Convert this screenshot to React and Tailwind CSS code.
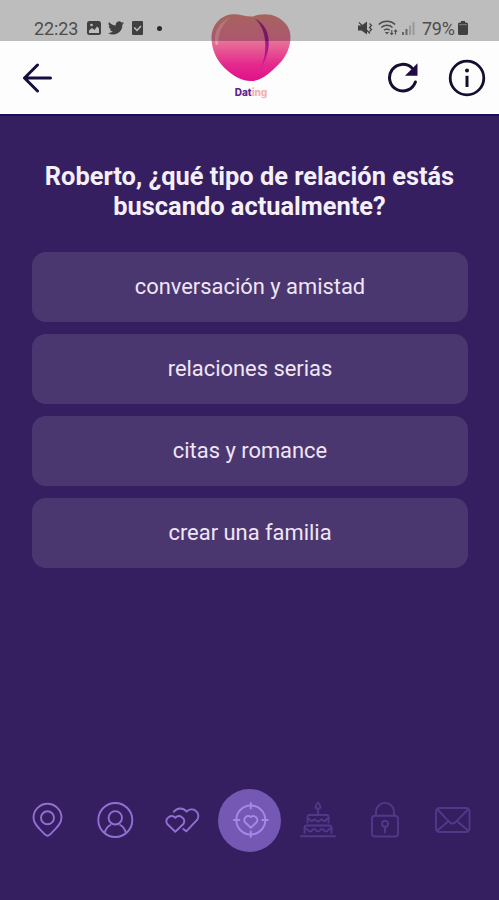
import clsx from "clsx";

const options = [
  "conversación y amistad",
  "relaciones serias",
  "citas y romance",
  "crear una familia",
];

const steps = [
  {
    id: "location",
    icon: (
      <>
        <path d="M20.500 35.700c-.9 0-1.600-.4-2.300-1.100C13.500 30 6.500 24.500 6.500 17.800a14 14 0 0 1 28 0c0 6.700-7 12.200-11.700 16.800-.7.7-1.400 1.100-2.300 1.100z" />
        <circle cx="20.500" cy="17.800" r="6.500" />
      </>
    ),
  },
  {
    id: "profile",
    icon: (
      <>
        <circle cx="20.300" cy="20" r="17" />
        <circle cx="20.300" cy="17.800" r="6.700" />
        <path d="M9.800 32.500c1-3.500 2.600-6 5.700-7.500M30.800 32.500c-1-3.500-2.600-6-5.700-7.500" />
      </>
    ),
  },
  {
    id: "hearts",
    icon: (
      <>
        <path d="M13.300 31.800 5 23.700a5.200 5.200 0 0 1 8.300-6 5.200 5.200 0 0 1 8.300 6z" />
        <path d="M11.800 11.800a8 8 0 0 1 12.900-.2 6.700 6.700 0 0 1 10.800 7.800L24.300 31.300l-3-2.300" />
      </>
    ),
  },
  {
    id: "match",
    active: true,
    icon: (
      <>
        <circle cx="20.800" cy="20" r="14.500" />
        <path d="M20.800 3v5.500M20.800 31.500V37M3.800 20h5.500M32.300 20h5.500" />
        <path d="m20.800 27.800-6-5.800a4 4 0 0 1 6-5 4 4 0 0 1 6 5z" />
      </>
    ),
  },
  {
    id: "birthday",
    muted: true,
    icon: (
      <>
        <path d="M21 2.500c-3.300 3.800-3.300 5.900 0 6.300 3.300-.4 3.300-2.500 0-6.300zM21 9v6" />
        <path d="M10.500 22.500V17q0-2 2-2h17q2 0 2 2v5.500" />
        <path d="M10.500 18.500c3 0 2 2.500 4 2.500s1.500-1.500 3-1.500 1.500 2 3.500 2 2-2 3.500-2 1 1.500 3 1.500 1-2.500 4-2.500" />
        <path d="M7.500 33V28q0-2.500 2.500-2.500h22q2.500 0 2.500 2.500v5" />
        <path d="M7.500 28.500c4 0 3 3 5.500 3s2-2.500 4-2.500 2 2.500 4 2.500 2-2.500 4-2.500 1.500 2.500 4 2.500 1.500-3 5.500-3M4 36.300h34" />
      </>
    ),
  },
  {
    id: "lock",
    muted: true,
    icon: (
      <>
        <rect x="7" y="15.800" width="26" height="20.700" rx="3" />
        <path d="M11 15.500v-3.600a9 9 0 0 1 18 0v3.600M20 27v5.500" />
        <circle cx="20" cy="23.700" r="3" />
      </>
    ),
  },
  {
    id: "mail",
    muted: true,
    icon: (
      <>
        <rect x="4" y="8" width="33.500" height="24" rx="3.500" />
        <path d="m5.500 9.500 12.200 12.800q2.800 2.600 5.600 0L36 9.500M5.500 30.500l10.500-9M36 30.500l-10.500-9" />
      </>
    ),
  },
];

const StatusBar = () => (
  <div className="absolute inset-x-0 top-0 z-10 h-[41px] bg-black/25 pt-4 pr-[31px] pl-[34px] text-[#4c4c4c]">
    <div className="flex h-6 items-center justify-between">
      <div className="flex items-center">
        <span className="w-[45px] text-[18px] tracking-[-0.1px]">22:23</span>
        {/* gallery */}
        <svg width="14" height="14" viewBox="0 0 14 14" className="ml-2">
          <rect width="14" height="14" rx="2.500" fill="#404040" />
          <path d="M2 9.500 5 7l2.500 2L10 5.500l2 2V12H2z" fill="#bfbfbf" />
          <circle cx="4.500" cy="4" r="1.300" fill="#bfbfbf" />
        </svg>
        {/* bird */}
        <svg
          width="16"
          height="14"
          viewBox="1 3 22 18"
          fill="#404040"
          className="ml-[7px]"
        >
          <path d="M23 5.100a9 9 0 0 1-2.600.7 4.500 4.500 0 0 0 2-2.500 9 9 0 0 1-2.900 1.100 4.500 4.500 0 0 0-7.700 4.100A12.800 12.800 0 0 1 2.500 3.800a4.500 4.500 0 0 0 1.400 6 4.500 4.500 0 0 1-2-.6 4.500 4.500 0 0 0 3.600 4.500 4.500 4.500 0 0 1-2 .1 4.500 4.500 0 0 0 4.200 3.100A9 9 0 0 1 1 18.800a12.800 12.800 0 0 0 19.700-11.400A9 9 0 0 0 23 5.100z" />
        </svg>
        {/* checked task */}
        <svg width="11" height="14" viewBox="0 0 11 14" className="ml-2">
          <rect width="11" height="14" rx="1" fill="#404040" />
          <path
            d="m2.300 6.500 2.700 3 4-4.500"
            fill="none"
            stroke="#bfbfbf"
            strokeWidth="1.500"
          />
        </svg>
        <span className="ml-[14px] size-[5px] rounded-full bg-[#2b2b2b]" />
      </div>

      <div className="flex items-center">
        {/* muted speaker */}
        <svg width="15" height="14" viewBox="0 0 15 14" fill="#404040">
          <path d="M0 4.500h3.500L9 .5v13l-5.500-4H0z" />
          <path
            d="m1 1.500 11 11M11.500 2.500l2 2-2 2 2 2-2 2"
            fill="none"
            stroke="#404040"
            strokeWidth="1.200"
          />
        </svg>
        {/* wifi */}
        <svg
          width="20"
          height="16"
          viewBox="0 0 20 16"
          fill="none"
          stroke="currentColor"
          strokeWidth="1.500"
          className="ml-[5px]"
        >
          <path d="M.7 4.500c4.500-4.300 12-4.300 16.500 0M3.300 7.500c3.200-3 8-3 11.200 0M6 10.300c1.800-1.600 4-1.600 5.700 0" />
          <path d="m6.800 12 2.200 2.500 2-2.500z" fill="currentColor" stroke="none" />
          <path
            d="M13.800 10v4.500m-1.500-1.500 1.500 1.500 1.300-1.500M17.500 14.500V10M16.200 11.500l1.300-1.500 1.500 1.500"
            strokeWidth="1.100"
          />
        </svg>
        {/* signal */}
        <svg width="13" height="14" viewBox="0 0 13 14" className="ml-1">
          <path d="M0 11h2v3H0zM3.500 8h2v6h-2z" fill="#666" />
          <path d="M7 4.500h2V14H7zM10.500 1h2v13h-2z" fill="#9a9a9a" />
        </svg>
        <span className="ml-[7px] w-[35px] text-[18px] tracking-[-0.3px]">79%</span>
        {/* battery */}
        <svg
          width="10"
          height="14"
          viewBox="0 0 10 14"
          fill="#404040"
          className="ml-[1px]"
        >
          <path d="M3 0h4v1.500h1.500Q10 1.500 10 3v9.500Q10 14 8.500 14h-7Q0 14 0 12.500V3q0-1.500 1.500-1.500H3z" />
          <path d="M1 3h8v1.200H1z" fill="#777" />
        </svg>
      </div>
    </div>
  </div>
);

const Logo = () => (
  <div className="flex flex-col items-center">
    <svg width="80" height="69" viewBox="0 0 80 69">
      <defs>
        <linearGradient id="peach" x1="0" y1="0" x2="0" y2="1">
          <stop offset="0" stopColor="#dd857c" />
          <stop offset="0.400" stopColor="#e87396" />
          <stop offset="0.750" stopColor="#e42a8d" />
          <stop offset="1" stopColor="#e0108a" />
        </linearGradient>
        <linearGradient id="crease" x1="0" y1="0" x2="0" y2="1">
          <stop offset="0" stopColor="#a02a88" />
          <stop offset="0.500" stopColor="#9c1a8e" />
          <stop offset="1" stopColor="#d71b8c" />
        </linearGradient>
      </defs>
      <path
        d="M42 3.500C48 1 58 0 66 4 74.500 8.500 79.500 15 79.500 24 79.500 34 75 44 68 51 60 59 51 68 40 68 30 68 21 62 13.500 55 5.500 47 .5 36 .5 25 .5 12 10 1.200 23 1.200 30 1.200 36 4 42 3.500z"
        fill="url(#peach)"
      />
      <path
        d="M43.500 5C54 11 58.500 20 57.700 32c-.5 8-3 16-8.700 24.500C53 48 54.500 40 54.300 31 54 20 50.500 12 43.500 5z"
        fill="url(#crease)"
      />
      <path
        d="M20 4C8 9 2 19 4.500 31c.4 1.600 2.500 1.400 2.700-.300C7.500 20 11 11 20 4z"
        fill="#f7c4bd"
        opacity="0.500"
      />
    </svg>
    <div className="mt-1 font-['Inter',sans-serif] text-[10px] leading-3 font-extrabold">
      <span className="text-[#65208d]">Dat</span>
      <span className="text-[#f4b0ae]">ing</span>
    </div>
  </div>
);

const Header = () => (
  <header className="relative h-[116px] border-b-2 border-[#19105a] bg-[#fdfdfd]">
    <div className="grid h-full grid-cols-3">
      <button aria-label="Volver" className="mt-[63px] ml-[22px] h-[30px] w-[30px]">
        <svg
          width="30"
          height="30"
          viewBox="0 0 30 30"
          fill="none"
          stroke="#160d40"
          strokeWidth="3"
          strokeLinecap="round"
          strokeLinejoin="round"
        >
          <path d="M28.500 15H2.500M15.500 2 2.500 15l13 13" />
        </svg>
      </button>

      <div className="flex justify-center pt-[13px] pl-[3px]">
        <Logo />
      </div>

      <div className="flex justify-end pt-[59px] pr-[13px]">
        <button aria-label="Actualizar" className="mr-[29px] h-[38px] w-[32px]">
          <svg width="32" height="38" viewBox="0 0 32 38" fill="none">
            <path
              d="M28.400 23A13.300 13.300 0 1 1 25 9"
              stroke="#160d30"
              strokeWidth="3"
              strokeLinecap="round"
            />
            <path d="M30.500 4.300v12.500H18z" fill="#220a4a" />
          </svg>
        </button>
        <button aria-label="Información" className="h-[38px] w-[38px]">
          <svg width="38" height="38" viewBox="0 0 38 38" fill="none">
            <circle cx="19" cy="19" r="16.800" stroke="#140e30" strokeWidth="2.800" />
            <circle cx="19" cy="11.500" r="2" fill="#140e30" />
            <path d="M17.500 16.800h3V28h-3z" fill="#140e30" />
          </svg>
        </button>
      </div>
    </div>
    <StatusBar />
  </header>
);

const Steps = () => (
  <nav className="mt-auto mb-[48px] flex justify-center">
    {steps.map((step) => (
      <div
        key={step.id}
        className="flex h-16 w-[67.5px] items-center justify-center"
      >
        <div
          className={clsx(
            "flex size-[63px] shrink-0 items-center justify-center rounded-full",
            step.active && "bg-[#7557b4]"
          )}
        >
          <svg
            width="40"
            height="40"
            viewBox="0 0 40 40"
            fill="none"
            strokeWidth="1.900"
            strokeLinecap="round"
            strokeLinejoin="round"
            className={clsx(
              "shrink-0",
              step.muted
                ? "stroke-[#533889]"
                : step.active
                  ? "stroke-[#a588ea]"
                  : "stroke-[#916fd5]"
            )}
          >
            {step.icon}
          </svg>
        </div>
      </div>
    ))}
  </nav>
);

const App = () => {
  return (
    <div className="flex h-screen flex-col overflow-hidden bg-[#361f60] font-['Roboto',sans-serif]">
      <Header />
      <main className="flex flex-1 flex-col">
        <h1 className="mt-[46px] text-center text-[25.4px] leading-[29.500px] font-bold whitespace-nowrap text-[#f5effb]">
          Roberto, ¿qué tipo de relación estás
          <br />
          buscando actualmente?
        </h1>

        <div className="mt-[31px] flex flex-col gap-3 pr-[31px] pl-8">
          {options.map((option) => (
            <button
              key={option}
              className="h-[70px] rounded-[14px] bg-[#4b3770] text-[21.9px] text-[#f0e5f7]"
            >
              {option}
            </button>
          ))}
        </div>

        <Steps />
      </main>
    </div>
  );
};

export default App;
